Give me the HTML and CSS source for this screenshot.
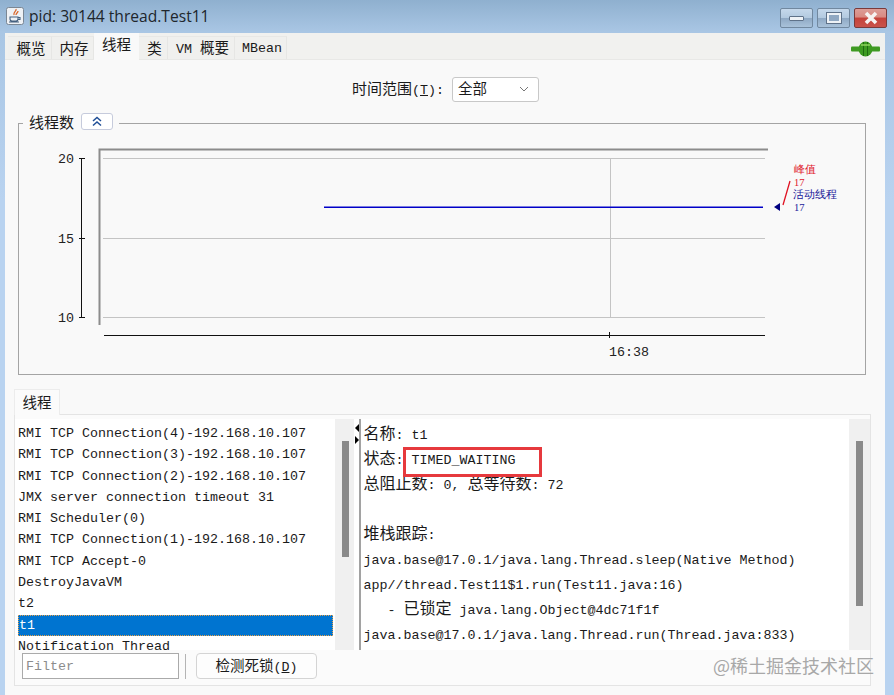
FILE: index.html
```html
<!DOCTYPE html>
<html lang="zh">
<head>
<meta charset="utf-8">
<title>pid: 30144 thread.Test11</title>
<link rel="stylesheet" href="styles.css">
</head>
<body>
<div class="window">
  <header class="titlebar">
    <svg class="java" width="18" height="18" viewBox="0 0 18 18"><rect x="0.5" y="0.5" width="17" height="17" rx="2" fill="#eef1f5" stroke="#7b8794"/><path d="M10 2c1 2-3 3-2 6M12 4c0 2-2 2-2 4" fill="none" stroke="#d9662a" stroke-width="1.3"/><path d="M4 10h8v2c0 1-1 2-2 2H6c-1 0-2-1-2-2zM12 10.500h2v2h-2M3 15h10" fill="none" stroke="#44607f" stroke-width="1.100"/></svg>
    <span class="title">pid: 30144 thread.Test11</span>
    <div class="controls">
      <div class="ctl"><i class="min"></i></div>
      <div class="ctl"><i class="max"></i></div>
      <div class="ctl close"><svg width="16" height="14" viewBox="0 0 16 14"><path d="M3 2l10 10M13 2L3 12" stroke="#f6f3f2" stroke-width="3.600"/></svg></div>
    </div>
  </header>
  <div class="frame">
    <nav class="tabs">
      <span class="tab w44"><span class="c">概览</span></span>
      <span class="tab w42"><span class="c">内存</span></span>
      <span class="tab w45 active"><span class="c">线程</span></span>
      <span class="tab w29"><span class="c">类</span></span>
      <span class="tab w67"><span>VM <span class="c">概要</span></span></span>
      <span class="tab w52">MBean</span>
      <svg class="plug" width="29" height="16" viewBox="0 0 29 16"><rect x="0" y="5.500" width="29" height="5" rx="1" fill="#3f9a22"/><ellipse cx="14.500" cy="8" rx="7" ry="7.500" fill="#3d9a20"/><path d="M12.500 1v14M16.500 1v14" stroke="#1f6a10" stroke-width="1"/><path d="M10 4h9" stroke="#8fd45e" stroke-width="1.500"/></svg>
    </nav>
    <main class="content">
      <div class="range">
        <span class="range-label"><span class="c c15">时间范围</span>(<u>T</u>):</span>
        <div class="select"><span class="c">全部</span><svg width="10" height="6" viewBox="0 0 10 6"><path d="M1 1l4 4 4-4" fill="none" stroke="#777" stroke-width="1"/></svg></div>
      </div>
      <fieldset class="chart-box">
        <legend class="chart-legend"><span class="c c15">线程数</span><span class="collapse"><svg width="12" height="11" viewBox="0 0 12 11"><path d="M2 5l4-3.500L10 5M2 9.500L6 6l4 3.500" fill="none" stroke="#1f4e96" stroke-width="1.500"/></svg></span></legend>
        <svg class="chart" width="846" height="239" viewBox="19 135 846 239">
          <g stroke="#c4c4c4" stroke-width="1">
            <path d="M103 158.500H765M103 238.500H765M103 317.500H765M610.500 158V317"/>
          </g>
          <path d="M99.500 325V149.500H768" fill="none" stroke="#8c8c8c" stroke-width="2"/>
          <path d="M81.500 158V317M79 158.500h6M79 238.500h6M79 317.500h6M104 335.500H765M609.500 332v6" fill="none" stroke="#111" stroke-width="1"/>
          <rect x="324" y="206.500" width="439" height="1.500" fill="#0000c8"/>
          <path d="M774 207l6-4v8z" fill="#000080"/>
          <path d="M790 181l-7 24" stroke="#e01020" stroke-width="1.300"/>
          <g class="axis">
            <text x="58" y="163">20</text>
            <text x="58" y="243">15</text>
            <text x="58" y="322">10</text>
            <text x="609" y="356">16:38</text>
          </g>
          <g class="legend-red">
            <text class="cjk" x="794" y="173">峰值</text>
            <text x="794" y="186">17</text>
          </g>
          <g class="legend-blue">
            <text class="cjk" x="793" y="198">活动线程</text>
            <text x="794" y="211">17</text>
          </g>
        </svg>
      </fieldset>
      <div class="thread-tab"><span class="c">线程</span></div>
      <section class="thread-panel">
        <div class="split">
          <div class="list-pane">
            <ul class="list">
              <li>RMI TCP Connection(4)-192.168.10.107</li>
              <li>RMI TCP Connection(3)-192.168.10.107</li>
              <li>RMI TCP Connection(2)-192.168.10.107</li>
              <li>JMX server connection timeout 31</li>
              <li>RMI Scheduler(0)</li>
              <li>RMI TCP Connection(1)-192.168.10.107</li>
              <li>RMI TCP Accept-0</li>
              <li>DestroyJavaVM</li>
              <li>t2</li>
              <li class="selected">t1</li>
              <li>Notification Thread</li>
            </ul>
            <div class="track left-track"><div class="thumb left-thumb"></div></div>
          </div>
          <div class="divider"><i class="arrow-l"></i><i class="arrow-r"></i></div>
          <div class="detail-pane">
            <div class="detail">
              <p><span class="c c16">名称</span>: t1</p>
              <p class="state-row"><span class="c c16">状态</span>: TIMED_WAITING<span class="highlight"></span></p>
              <p><span class="c c16">总阻止数</span>: 0, <span class="c c16">总等待数</span>: 72</p>
              <p>&nbsp;</p>
              <p><span class="c c16">堆栈跟踪</span>:</p>
              <p>java.base@17.0.1/java.lang.Thread.sleep(Native Method)</p>
              <p>app//thread.Test11$1.run(Test11.java:16)</p>
              <p>&nbsp;&nbsp;&nbsp;- <span class="c c16">已锁定</span> java.lang.Object@4dc71f1f</p>
              <p>java.base@17.0.1/java.lang.Thread.run(Thread.java:833)</p>
            </div>
            <div class="track right-track"><div class="thumb right-thumb"></div></div>
          </div>
        </div>
        <div class="toolbar">
          <input class="filter" type="text" placeholder="Filter">
          <span class="tool-sep"></span>
          <button class="detect" type="button"><span class="c">检测死锁</span>(<u>D</u>)</button>
        </div>
      </section>
    </main>
  </div>
</div>
<div class="watermark">@稀土掘金技术社区</div>
</body>
</html>
```
FILE: styles.css
```css
* { box-sizing: border-box; }
html, body { margin: 0; height: 100%; overflow: hidden; }
body {
  position: relative;
  font-family: "Liberation Mono", "Noto Sans CJK SC", monospace;
  font-size: 13.33px;
  color: #1a1a1a;
  background: #b9d2ef;
}
.c { font-family: "Noto Sans CJK SC", sans-serif; font-size: 14.500px; line-height: 1; }
.c15 { font-size: 15px; }
.c16 { font-size: 16px; }
.window {
  height: 695px;
  display: flex;
  flex-direction: column;
  background: linear-gradient(180deg, #8fb0cf 0, #a9c6e4 32px, #b9d3f0 200px, #b9d3f0 100%);
}
.titlebar { height: 33px; display: flex; align-items: center; padding: 0 7px 1px 6px; }
.java { margin-right: 5px; }
.title { font-family: "Open Sans", sans-serif; font-size: 15.600px; color: #20262c; }
.controls { margin-left: auto; display: flex; gap: 4px; align-self: flex-start; margin-top: 8px; }
.ctl {
  width: 33px; height: 20px;
  display: flex; align-items: center; justify-content: center;
  border: 1px solid #71889f; border-radius: 2px;
  background: linear-gradient(180deg, #c5d8eb 0, #b3cae0 48%, #8fa9c4 52%, #a9c2da 100%);
}
.ctl.close { border-color: #7a3a3a; background: linear-gradient(180deg, #dc9d97 0, #d98a82 45%, #c5423a 50%, #c9524a 100%); }
.min { width: 15px; height: 5px; background: #eef2f6; border: 1px solid #5f7289; border-radius: 1px; }
.max { width: 16px; height: 12px; border: 3px solid #eef2f6; outline: 1px solid #5f7289; outline-offset: -1px; background: #90a8c2; }
.frame { flex: 1; margin: 0 9px 0 5px; display: flex; flex-direction: column; min-height: 0; background: #f9f9f9; }
.tabs { height: 27px; display: flex; align-items: stretch; padding-left: 3px; background: #f1f1ef; border-bottom: 1px solid #e8e8e6; position: relative; }
.tab { display: flex; align-items: center; justify-content: center; margin-top: 3px; padding-left: 3px; background: #f0f0ee; border-right: 1px solid #e6e6e4; border-top: 1px solid #e8e8e6; }
.w44 { width: 44px; } .w42 { width: 42px; } .w45 { width: 45px; } .w29 { width: 29px; } .w67 { width: 67px; } .w52 { width: 52px; }
.tab.active { margin-top: 0; margin-bottom: -1px; background: #f9f9f9; padding: 0 0 4px; border: 0; }
.plug { margin: 8px 5px 0 auto; }
.content { flex: 1; min-height: 0; display: flex; flex-direction: column; }
.range { display: flex; justify-content: center; align-items: center; gap: 8px; margin-top: 17px; height: 25px; padding-left: 1px; }
.range-label { line-height: 1; padding-bottom: 2px; }
.select { width: 87px; height: 25px; padding: 0 9px 2px 5px; display: flex; align-items: center; justify-content: space-between; background: #fff; border: 1px solid #c8c8c8; border-radius: 3px; }
.chart-box { margin: 9px 19px 0 13px; padding: 0; height: 264px; border: 1px solid #a4a4a4; border-radius: 0; }
.chart-legend { margin-left: 4px; padding: 0 6px 4px; height: 24px; display: flex; align-items: center; gap: 7px; }
.collapse { width: 32px; height: 17px; display: flex; align-items: center; justify-content: center; background: #fff; border: 1px solid #c6cbdc; border-radius: 3px; }
.chart { display: block; }
.axis text { font-family: "Liberation Mono", monospace; font-size: 13.33px; fill: #222; }
.legend-red text, .legend-blue text { font-family: "Liberation Serif", serif; font-size: 10.500px; }
.legend-red text { fill: #e0202c; }
.legend-blue text { fill: #20209a; }
.cjk { font-family: "Noto Sans CJK SC", sans-serif; }
.thread-tab { margin: 14px 0 0 9px; width: 46px; height: 26px; display: flex; align-items: center; justify-content: center; background: #fbfbfb; border: 1px solid #ececec; border-bottom: 0; position: relative; z-index: 1; margin-bottom: -1px; }
.thread-panel { margin: 0 14px 0 9px; height: 272px; border: 1px solid #e4e4e4; background: #fbfbfb; padding-top: 4px; }
.split { height: 231px; display: flex; background: #fff; overflow: hidden; }
.list-pane { width: 339px; display: flex; flex-shrink: 0; padding-left: 3px; }
.list { list-style: none; margin: 4px 0 0; padding: 0; flex: 0 0 315px; }
.list li { height: 21.300px; line-height: 21px; white-space: nowrap; }
.list .selected { color: #fff; background: #0074d0; outline: 1px dotted #e8a048; outline-offset: -1px; padding-left: 1px; }
.track { width: 19px; background: #f0f0f0; position: relative; flex-shrink: 0; }
.left-track { margin-left: 2px; }
.thumb { width: 7px; background: #8a8a8a; margin-left: 7px; }
.left-thumb { height: 116px; margin-top: 22px; }
.right-thumb { height: 165px; margin-top: 22px; }
.right-track { width: 21px; margin-left: auto; }
.divider { width: 7px; flex-shrink: 0; border-right: 2px solid #a2a2a2; position: relative; background: #fff; }
.arrow-l, .arrow-r { position: absolute; left: 1px; width: 0; height: 0; border-style: solid; }
.arrow-l { top: 5px; border-width: 4px 4px 4px 0; border-color: transparent #000 transparent transparent; }
.arrow-r { top: 17px; border-width: 4px 0 4px 4px; border-color: transparent transparent transparent #000; }
.detail-pane { flex: 1; display: flex; min-width: 0; }
.detail { padding: 4px 0 0 2.500px; white-space: nowrap; flex: 1; min-width: 0; }
.detail p { margin: 0; height: 25px; line-height: 25px; }
.state-row { position: relative; }
.highlight { position: absolute; left: 39px; top: -1px; width: 139px; height: 30px; border: 3px solid #e6393d; pointer-events: none; }
.toolbar { display: flex; align-items: center; height: 34px; padding: 0 0 2px 7px; }
.filter { width: 157px; height: 26px; padding: 0 3px; font: 13.33px "Liberation Mono", monospace; background: #fff; border: 1px solid #aaa; border-radius: 0; }
.filter::placeholder { color: #8c8c8c; }
.tool-sep { width: 1px; height: 25px; margin: 0 10px 0 6px; background: #b4b4b4; }
.detect { width: 121px; height: 26px; padding: 0; font: inherit; color: #1a1a1a; background: #fdfdfd; border: 1px solid #d4d4d4; border-radius: 4px; }
.watermark { position: absolute; left: 713px; top: 652px; font-family: "Noto Sans CJK SC", sans-serif; font-size: 18px; line-height: 26px; color: #a8a8a8; white-space: nowrap; }
```
